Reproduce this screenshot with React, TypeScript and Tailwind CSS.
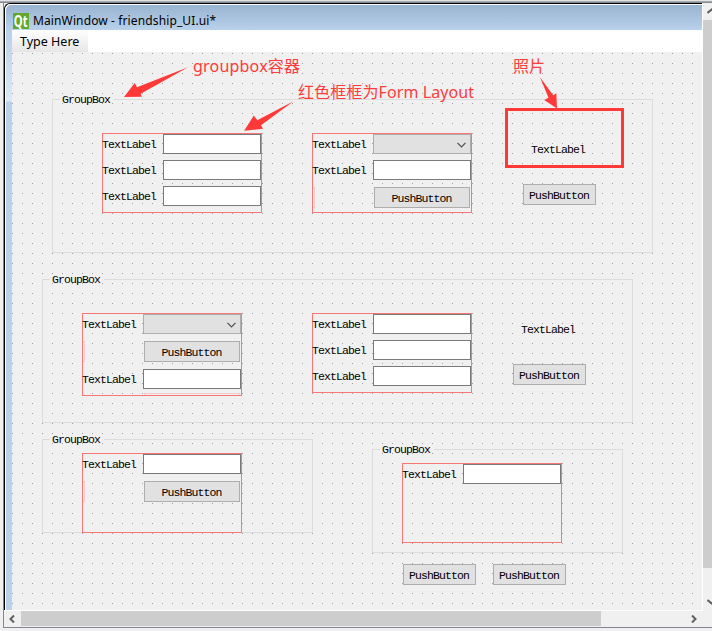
import type { ReactNode } from "react";

type RowKind = "input" | "combo" | "button";

const mono = "font-['Liberation_Mono',monospace] text-[11.5px] tracking-[-0.9px] text-black";

function Label({ className = "" }: { className?: string }) {
  return <span className={`${mono} block whitespace-nowrap pt-px leading-5 ${className}`}>TextLabel</span>;
}

function PushButton({ className = "w-[73px]" }: { className?: string }) {
  return (
    <button className={`${mono} flex h-[21px] items-center justify-center border border-[#adadad] bg-[#e1e1e1] pr-px pt-[3px] leading-none ${className}`}>
      PushButton
    </button>
  );
}

function Row({ kind }: { kind: RowKind }) {
  if (kind === "button") {
    return (
      <div className="flex h-[23px] items-center justify-between pr-px">
        <div className="h-[21px] w-0.5 border-y border-r border-[#f6cbcb]" />
        <PushButton className="w-24" />
      </div>
    );
  }
  return (
    <div className="flex h-5">
      <Label className="-ml-px w-[61px]" />
      {kind === "input" ? (
        <div className="w-[98px] border border-[#7a7a7a] bg-white" />
      ) : (
        <div className="flex w-[98px] items-center justify-end border border-[#adadad] bg-[#e1e1e1] pr-1 pt-px">
          <svg width="9" height="6" viewBox="0 0 9 6" fill="none" stroke="#505050" strokeWidth="1.2">
            <path d="M0.5 0.8 L4.5 4.8 L8.5 0.8" />
          </svg>
        </div>
      )}
    </div>
  );
}

function FormLayout({ rows, className = "h-20", children }: { rows: RowKind[]; className?: string; children?: ReactNode }) {
  return (
    <div className={`flex w-40 shrink-0 flex-col gap-1.5 border border-[#f87676] ${className}`}>
      {rows.map((kind, i) => (
        <Row key={i} kind={kind} />
      ))}
      {children}
    </div>
  );
}

function GroupBox({ className, children }: { className: string; children: ReactNode }) {
  return (
    <fieldset className={`shrink-0 border border-[#dcdcdc] ${className}`}>
      <legend className={`${mono} ml-[7px] h-[13px] w-[54px] pl-0.5 leading-[13px]`}>GroupBox</legend>
      <div className="flex items-start">{children}</div>
    </fieldset>
  );
}

function Note({ className, children }: { className: string; children: ReactNode }) {
  return (
    <div className={`absolute whitespace-nowrap font-['Noto_Sans','Noto_Sans_CJK_SC',sans-serif] text-base leading-6 text-[#ff3b3b] ${className}`}>
      {children}
    </div>
  );
}

function Annotations() {
  return (
    <>
      <svg className="pointer-events-none absolute left-0 top-0" width="712" height="220" viewBox="0 0 712 220" fill="#ff3838">
        <path d="M188 67.3 L137 87.3 L134.7 83 L124 97 L141.8 96.8 L140.7 93.8 Z" />
        <path d="M293.5 101.3 L257.3 120.3 L253.8 115.5 L244.2 130.8 L263 128.8 L261 125.3 Z" />
        <path d="M540 77.3 L548.5 97.8 L544.2 100 L557 108.4 L556.3 93.2 L553.2 95.3 Z" />
      </svg>
      <div className="pointer-events-none absolute left-[505px] top-[108px] h-[60px] w-[119px] border-[3px] border-[#ff3838]" />
      <Note className="left-[193px] top-[54px] tracking-[0.2px]">groupbox容器</Note>
      <Note className="left-[298px] top-[80px] tracking-[0.1px]">红色框框为Form Layout</Note>
      <Note className="left-[513px] top-[54px]">照片</Note>
    </>
  );
}

function Canvas() {
  return (
    <main className="flex h-[558px] flex-col bg-[#f0f0f0] bg-[linear-gradient(90deg,#f0f0f0_9px,transparent_9px),linear-gradient(#f0f0f0_9px,#a0a0a0_9px)] bg-[length:10px_10px] bg-[position:1px_2px]">
      <GroupBox className="ml-10 mt-[41px] h-40 w-[601px]">
        <FormLayout className="ml-[49px] mt-[27px] h-20" rows={["input", "input", "input"]} />
        <FormLayout className="ml-[50px] mt-[27px] h-20" rows={["combo", "input", "button"]} />
        <div className="ml-[51px] mt-[33px]">
          <Label className="ml-2" />
          <PushButton className="mt-6 w-[73px]" />
        </div>
      </GroupBox>
      <GroupBox className="ml-[30px] mt-5 h-[150px] w-[591px]">
        <FormLayout className="ml-[39px] mt-[27px] h-[83px]" rows={["combo", "button", "input"]}>
          <div className="-mt-0.5 ml-[61px] h-0.5 w-24 border-x border-t border-[#f6cbcb]" />
        </FormLayout>
        <FormLayout className="ml-[70px] mt-[27px] h-20" rows={["input", "input", "input"]} />
        <div className="ml-[41px] mt-[33px]">
          <Label className="ml-2" />
          <PushButton className="mt-6 w-[73px]" />
        </div>
      </GroupBox>
      <div className="ml-[30px] mt-2.5 flex items-start">
        <GroupBox className="h-[100px] w-[271px]">
          <FormLayout className="ml-[39px] mt-[7px] h-20" rows={["input", "button"]} />
        </GroupBox>
        <div className="ml-[59px] mt-2.5">
          <GroupBox className="h-[110px] w-[251px]">
            <FormLayout className="ml-[29px] mt-[7px] h-20" rows={["input"]} />
          </GroupBox>
          <div className="ml-[31px] mt-[11px] flex gap-[17px]">
            <PushButton />
            <PushButton />
          </div>
        </div>
      </div>
    </main>
  );
}

export default function App() {
  return (
    <div className="relative flex h-[631px] w-[712px] flex-col overflow-hidden bg-[#f0f0f0]">
      <div className="h-px shrink-0 bg-[#e3e3e3]" />
      <div className="h-px shrink-0 bg-[#a5aaae]" />
      <div className="h-px shrink-0 bg-[#858b93]" />
      <div className="flex h-[607px] shrink-0">
        <div className="w-[3px] shrink-0 bg-[#f0f0f0]" />
        <div className="w-px shrink-0 bg-[#828790]" />
        <div className="flex w-[698px] shrink-0 flex-col rounded-tl-md border-l border-t border-black bg-white pl-px pt-px">
          <header className="flex h-[25px] shrink-0 items-center rounded-tl-[5px] bg-linear-to-b from-[#99b4d1] to-[#b9d1ea] pl-[7px] pt-[7px]">
            <div className="flex h-4 w-4 items-center justify-center bg-[#61a82c]">
              <span className="scale-x-80 scale-y-110 font-['Open_Sans',sans-serif] text-[14px] font-bold leading-none text-white">Qt</span>
            </div>
            <h1 className="ml-1 whitespace-nowrap font-['Noto_Sans',sans-serif] text-[12px] leading-[18px] tracking-[0.12px] text-black">
              MainWindow - friendship_UI.ui*
            </h1>
          </header>
          <div className="flex min-h-0 flex-1">
            <div className="w-1.5 shrink-0 bg-linear-to-b from-[#b9d1ea] from-0% via-[#dce8f6] via-[71px] to-[#b9d1ea] to-[72px]" />
            <div className="w-[690px] shrink-0">
              <nav className="flex h-[22px] bg-white">
                <div className="w-[76px] bg-linear-to-b from-white to-[#e6e6e6] pl-2 font-['Noto_Sans',sans-serif] text-[12.5px] leading-[23px] text-black">Type Here</div>
              </nav>
              <Canvas />
            </div>
          </div>
        </div>
        <div className="w-px shrink-0 bg-white" />
        <aside className="w-[9px] shrink-0 overflow-hidden">
          <svg className="ml-1 mt-[5px]" width="9" height="6" fill="none" stroke="#606060" strokeWidth="2">
            <path d="M0.5 5 L4.5 1.5 L8.5 5" />
          </svg>
          <div className="mt-[6px] h-[548px] bg-[#cdcdcd]" />
          <svg className="ml-1 mt-[31px]" width="9" height="6" fill="none" stroke="#606060" strokeWidth="2">
            <path d="M0.5 1 L4.5 4.5 L8.5 1" />
          </svg>
        </aside>
      </div>
      <footer className="ml-[3px] h-[18px] shrink-0 border-b border-l border-[#828790]">
        <div className="h-px w-[699px] bg-white" />
        <div className="flex h-4 w-full items-start">
          <div className="flex h-[15px] w-[17px] items-center justify-center pr-0.5">
            <svg width="6" height="8" fill="none" stroke="#606060" strokeWidth="2">
              <path d="M5 0.5 L1.5 4 L5 7.5" />
            </svg>
          </div>
          <div className="h-[15px] w-[580px] bg-[#cdcdcd]" />
          <svg className="ml-[90px] mt-1" width="6" height="8" fill="none" stroke="#606060" strokeWidth="2">
            <path d="M1 0.5 L4.5 4 L1 7.5" />
          </svg>
        </div>
      </footer>
      <Annotations />
    </div>
  );
}
